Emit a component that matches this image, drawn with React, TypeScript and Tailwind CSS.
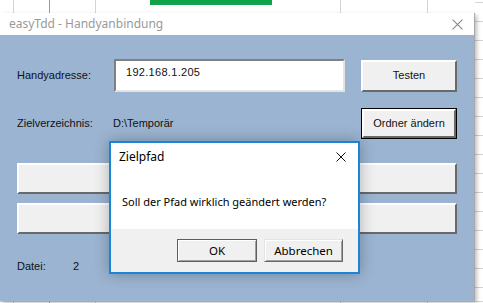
import React from 'react';

const raised =
  'bg-[#f0f0f0] border-t-2 border-l-2 border-b-2 border-r-2 border-t-white border-l-white border-b-[#696969] border-r-[#696969]';

function CloseIcon({ color, size }: { color: string; size: number }) {
  return (
    <svg width={size} height={size} viewBox="0 0 10 10">
      <path d="M0.5 0.5 L9.5 9.5 M9.5 0.5 L0.5 9.5" stroke={color} strokeWidth="1" fill="none" />
    </svg>
  );
}

function SheetGrid() {
  const cols = [13, 49, 95, 340, 427];
  const rows = Array.from({ length: 16 }, (_, i) => 2 + i * 19);
  return (
    <svg className="absolute inset-0" width={483} height={303}>
      {cols.map((x) => (
        <line key={x} x1={x + 0.5} y1={0} x2={x + 0.5} y2={303} stroke={x === 49 ? '#9a9a9a' : '#d4d4d4'} />
      ))}
      {rows.map((y) => (
        <line key={y} x1={475} y1={y + 0.5} x2={483} y2={y + 0.5} stroke="#d4d4d4" />
      ))}
      <line x1={0} y1={301.5} x2={483} y2={301.5} stroke="#d4d4d4" />
      <rect x={150} y={0} width={122} height={5} fill="#10a34a" />
    </svg>
  );
}

export default function App() {
  return (
    <div className="relative w-[483px] h-[303px] bg-white overflow-hidden font-['Liberation_Sans',Arial,sans-serif]">
      <SheetGrid />

      {/* main window */}
      <div className="absolute left-0 top-[13px] w-[475px] h-[288px] flex flex-col border-r border-[#a8a8a8] shadow-[2px_2px_4px_rgba(0,0,0,0.25)]">
        <div className="h-[22px] bg-white flex items-center justify-between pl-[9px] pr-[11px]">
          <span className="text-[12px] text-[#999] font-['Noto_Sans',sans-serif]">easyTdd - Handyanbindung</span>
          <CloseIcon color="#888" size={11} />
        </div>
        <div className="flex-1 bg-[#9bb4d1] px-[17px] pt-[24px] text-[11px] text-[#111]">
          <div className="flex items-center h-[33px]">
            <span className="w-[97px]">Handyadresse:</span>
            <div className="w-[231px] h-[33px] bg-white border-t-2 border-l-2 border-t-[#808080] border-l-[#808080] border-b-2 border-r-2 border-b-[#e3e3e3] border-r-[#e3e3e3] pl-[10px] pt-[3px] tracking-[0.3px]">
              192.168.1.205
            </div>
            <button className={`ml-[16px] w-[96px] h-[32px] ${raised}`}>Testen</button>
          </div>

          <div className="flex items-center h-[31px] mt-[16px]">
            <span className="w-[96px]">Zielverzeichnis:</span>
            <span>D:\Temporär</span>
            <div className="ml-auto w-[96px] h-[31px] border border-black">
              <button className={`w-full h-full ${raised} border-t-1 border-l-1 border-b-1 border-r-1`}>
                Ordner ändern
              </button>
            </div>
          </div>

          <button className={`block w-full h-[31px] mt-[24px] ${raised}`} />
          <button className={`block w-full h-[31px] mt-[9px] ${raised}`} />

          <div className="flex items-center h-[14px] mt-[25px]">
            <span className="w-[56px]">Datei:</span>
            <span>2</span>
          </div>
        </div>
      </div>

      {/* message box */}
      <div className="absolute left-[109px] top-[141px] w-[251px] h-[133px] flex flex-col border-2 border-[#1a84d6] bg-white shadow-[0_0_14px_rgba(0,0,0,0.28)] font-['Noto_Sans',sans-serif]">
        <div className="h-[26px] flex items-center justify-between pl-[8px] pr-[12px] pt-[2px]">
          <span className="text-[12px] text-black">Zielpfad</span>
          <CloseIcon color="#111" size={10} />
        </div>
        <div className="flex-1 pl-[11px] pt-[25px] text-[11px] text-black">
          Soll der Pfad wirklich geändert werden?
        </div>
        <div className="h-[43px] bg-[#f0f0f0] flex items-start justify-end gap-[7px] pt-[10px] pr-[15px]">
          <button className="w-[80px] h-[23px] bg-[#f0f0f0] border border-[#5e5e5e] shadow-[inset_1px_1px_0_#fff,inset_-1px_-1px_0_#a0a0a0] text-[11.5px] text-black">
            OK
          </button>
          <button className="w-[79px] h-[23px] bg-[#f0f0f0] border-t border-l border-b border-r border-t-[#e3e3e3] border-l-[#e3e3e3] border-b-[#696969] border-r-[#696969] shadow-[inset_1px_1px_0_#fff,inset_-1px_-1px_0_#a0a0a0] text-[11.5px] text-black">
            Abbrechen
          </button>
        </div>
      </div>
    </div>
  );
}
